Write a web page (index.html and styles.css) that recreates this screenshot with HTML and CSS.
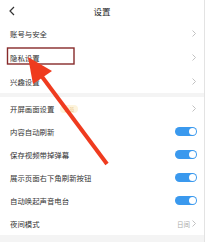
FILE: index.html
```html
<!DOCTYPE html>
<html lang="zh">
<head>
<meta charset="utf-8">
<link rel="stylesheet" href="styles.css">
</head>
<body>
<div class="page">
  <header class="top">
    <svg class="back" width="6" height="10" viewBox="0 0 6 10"><polyline points="5,1 1,5 5,9" fill="none" stroke="#333" stroke-width="1.2"/></svg>
    <h1 class="title">设置</h1>
    <span></span>
  </header>
  <section class="group g1">
    <div class="row"><span class="label">账号与安全</span><svg class="chev" width="4" height="7" viewBox="0 0 4 7"><polyline points="0.5,0.5 3.5,3.5 0.5,6.5" fill="none" stroke="#bbb" stroke-width="0.9"/></svg></div>
    <div class="row"><span class="label">隐私设置</span><svg class="chev" width="4" height="7" viewBox="0 0 4 7"><polyline points="0.5,0.5 3.5,3.5 0.5,6.5" fill="none" stroke="#bbb" stroke-width="0.9"/></svg></div>
    <div class="row"><span class="label">兴趣设置</span><svg class="chev" width="4" height="7" viewBox="0 0 4 7"><polyline points="0.5,0.5 3.5,3.5 0.5,6.5" fill="none" stroke="#bbb" stroke-width="0.9"/></svg></div>
  </section>
  <section class="group g2">
    <div class="row"><span class="label">开屏画面设置<span class="badge">会员</span></span><svg class="chev" width="4" height="7" viewBox="0 0 4 7"><polyline points="0.5,0.5 3.5,3.5 0.5,6.5" fill="none" stroke="#bbb" stroke-width="0.9"/></svg></div>
    <div class="row"><span class="label">内容自动刷新</span><span class="toggle"></span></div>
    <div class="row"><span class="label">保存视频带掉弹幕</span><span class="toggle"></span></div>
    <div class="row"><span class="label">展示页面右下角刷新按钮</span><span class="toggle"></span></div>
    <div class="row"><span class="label">自动唤起声音电台</span><span class="toggle"></span></div>
    <div class="row"><span class="label">夜间模式</span><span class="value">日间<svg class="chev" width="4" height="7" viewBox="0 0 4 7"><polyline points="0.5,0.5 3.5,3.5 0.5,6.5" fill="none" stroke="#bbb" stroke-width="0.9"/></svg></span></div>
  </section>
  <svg class="annot" width="208" height="242" viewBox="0 0 208 242">
    <rect x="7.5" y="48" width="66.5" height="16" fill="none" stroke="#872a2a" stroke-width="1.4"/>
    <line x1="40" y1="74" x2="107" y2="164" stroke="#ef3b1f" stroke-width="4"/>
    <polygon points="28,57 52,71 33,84" fill="#ef3b1f"/>
  </svg>
</div>
</body>
</html>
```

FILE: styles.css
```css
html, body {
  margin: 0;
  padding: 0;
  background: #ffffff;
}
body {
  font-family: "Noto Sans CJK SC", "Noto Sans", sans-serif;
  color: #333;
}
.page {
  position: relative;
  width: 204px;
  height: 242px;
  background: #f4f4f4;
  border-right: 1px solid #e3e3e3;
  overflow: hidden;
}
.top {
  height: 21px;
  background: #fff;
  display: grid;
  grid-template-columns: 20px 1fr 20px;
  align-items: center;
}
.back {
  margin-left: 9px;
}
.title {
  margin: 0;
  font-size: 8.5px;
  font-weight: normal;
  text-align: center;
  color: #222;
}
.group {
  background: #fff;
  margin-bottom: 4px;
}
.row {
  display: flex;
  align-items: center;
  justify-content: space-between;
  padding: 0 8px 0 10px;
  background: #fff;
  font-size: 7.4px;
  color: #333;
}
.g1 .row { height: 24px; }
.g2 .row { height: 23px; }
.label {
  display: flex;
  align-items: center;
}
.badge {
  margin-left: 6px;
  padding: 0 4px;
  height: 8px;
  line-height: 8px;
  border-radius: 4px;
  background: #fdf4dc;
  color: #e9c27c;
  font-size: 5px;
}
.toggle {
  position: relative;
  width: 22px;
  height: 9px;
  border-radius: 5px;
  background: #3a99ee;
  margin-right: -1px;
}
.toggle::after {
  content: "";
  position: absolute;
  right: 1px;
  top: 1px;
  width: 7px;
  height: 7px;
  border-radius: 50%;
  background: #fff;
}
.value {
  display: flex;
  align-items: center;
  gap: 2px;
  color: #aaa;
  font-size: 6.5px;
}
.annot {
  position: absolute;
  left: 0;
  top: 0;
  pointer-events: none;
}
```
